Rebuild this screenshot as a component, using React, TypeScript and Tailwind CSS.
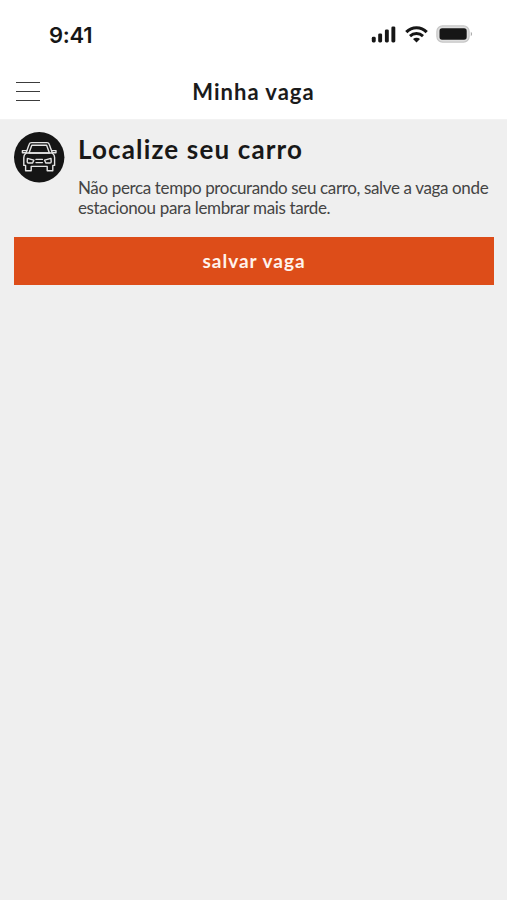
import type { ReactNode } from "react";

function StatusBar() {
  return (
    <div className="flex h-[68px] items-center justify-between pl-[49px] pr-[34px] text-[#161616]">
      <span className="relative top-px font-['Inter'] text-[22px] font-semibold leading-none tracking-[-0.3px]">9:41</span>
      <div className="flex items-center">
        <svg width="25" height="18" viewBox="0 0 25 18" fill="currentColor" aria-hidden="true">
          <rect x="0.8" y="11.8" width="3.9" height="5.6" rx="1.4" />
          <rect x="7.2" y="8.4" width="3.9" height="9" rx="1.4" />
          <rect x="13.9" y="4.4" width="3.9" height="13" rx="1.4" />
          <rect x="20.4" y="1.4" width="3.9" height="16" rx="1.4" />
        </svg>
        <svg className="ml-[9px]" width="23" height="18" viewBox="0 0 23 18" fill="none" stroke="currentColor" aria-hidden="true">
          <path d="M1.3 7.2C7 1.3 16 1.3 21.7 7.2" strokeWidth="3.1" />
          <path d="M5 11.1C8.7 7.6 14.3 7.6 18 11.1" strokeWidth="2.9" />
          <path d="M8 14C10 12.3 13 12.3 15 14L11.5 17.5Z" fill="currentColor" stroke="none" />
        </svg>
        <svg className="ml-[8px]" width="37" height="20" viewBox="0 0 37 20" aria-hidden="true">
          <rect x="0.9" y="1.9" width="32.2" height="16.2" rx="5.6" fill="#dedede" stroke="#c6c6c6" strokeWidth="1.2" />
          <rect x="3.5" y="4.3" width="27.2" height="11.4" rx="2.6" fill="currentColor" />
          <path d="M34.8 7.8C36.5 8.5 36.5 11.5 34.8 12.2Z" fill="#a8a8a8" />
        </svg>
      </div>
    </div>
  );
}

function Header({ children }: { children: ReactNode }) {
  return (
    <header className="grid h-[51px] grid-cols-[1fr_auto_1fr] items-center px-4">
      <button type="button" aria-label="Abrir menu" className="relative -top-[2px] flex w-6 flex-col gap-[8px]">
        <span className="h-px w-full bg-[#3c3c3c]" />
        <span className="h-px w-full bg-[#3c3c3c]" />
        <span className="h-px w-full bg-[#3c3c3c]" />
      </button>
      <h1 className="relative -top-[2px] font-['Lato'] text-[22px] font-bold leading-none tracking-[1px] text-[#1b1b1b]">
        {children}
      </h1>
    </header>
  );
}

function CarIcon() {
  return (
    <svg
      className="shrink-0"
      width="51"
      height="51"
      viewBox="0 0 51 51"
      fill="none"
      stroke="#e4e4e4"
      strokeWidth="1.4"
      strokeLinejoin="round"
      strokeLinecap="round"
      aria-hidden="true"
    >
      <circle cx="25.2" cy="25.3" r="25.2" fill="#151515" stroke="none" />
      {/* roof and windscreen */}
      <path d="M12.2 20.6L15.2 12.2Q15.7 10.6 17.4 10.6H33Q34.7 10.6 35.2 12.2L38.2 20.6" />
      <path d="M15 21L17.8 13.2H32.6L35.4 21Z" />
      {/* mirrors */}
      <path d="M12.8 18.6H8.4V20.8H12" />
      <path d="M37.6 18.6H42V20.8H38.4" />
      {/* body and wheels */}
      <path d="M12.2 21Q9.8 23 9.8 25.4V33.4H11.6V38.8H17.2V34.4H33.2V38.8H38.8V33.4H40.6V25.4Q40.6 23 38.2 21Z" />
      {/* headlights and grille */}
      <path d="M13.4 26.4L19.8 28.2L18.6 31H14.4Q13.2 31 13.2 29.8Z" />
      <path d="M37 26.4L30.6 28.2L31.8 31H36Q37.2 31 37.2 29.8Z" />
      <path d="M22 27.4H28.4M22 30.6H28.4" />
    </svg>
  );
}

export default function App() {
  return (
    <div className="flex h-screen flex-col overflow-hidden bg-white">
      <StatusBar />
      <Header>Minha vaga</Header>

      <main className="flex-1 border-t border-[#f2f2f2] bg-[#efefef] pl-[14px] pr-[13px] pt-3">
        <section className="flex gap-[13px]">
          <CarIcon />
          <div>
            <h2 className="mt-[2px] font-['Lato'] text-[26px] font-bold leading-[30px] tracking-[1.15px] text-[#181818]">
              Localize seu carro
            </h2>
            <p className="mt-[14px] whitespace-nowrap font-['Lato'] text-[17px] leading-5 tracking-[-0.36px] text-[#444444]">
              Não perca tempo procurando seu carro, salve a vaga onde
              <br />
              estacionou para lembrar mais tarde.
            </p>
          </div>
        </section>

        <button
          type="button"
          className="mt-[19px] h-12 w-full bg-[#dd4d19] font-['Lato'] text-[19px] font-bold tracking-[1px] text-[#fff3ec]"
        >
          salvar vaga
        </button>
      </main>
    </div>
  );
}
